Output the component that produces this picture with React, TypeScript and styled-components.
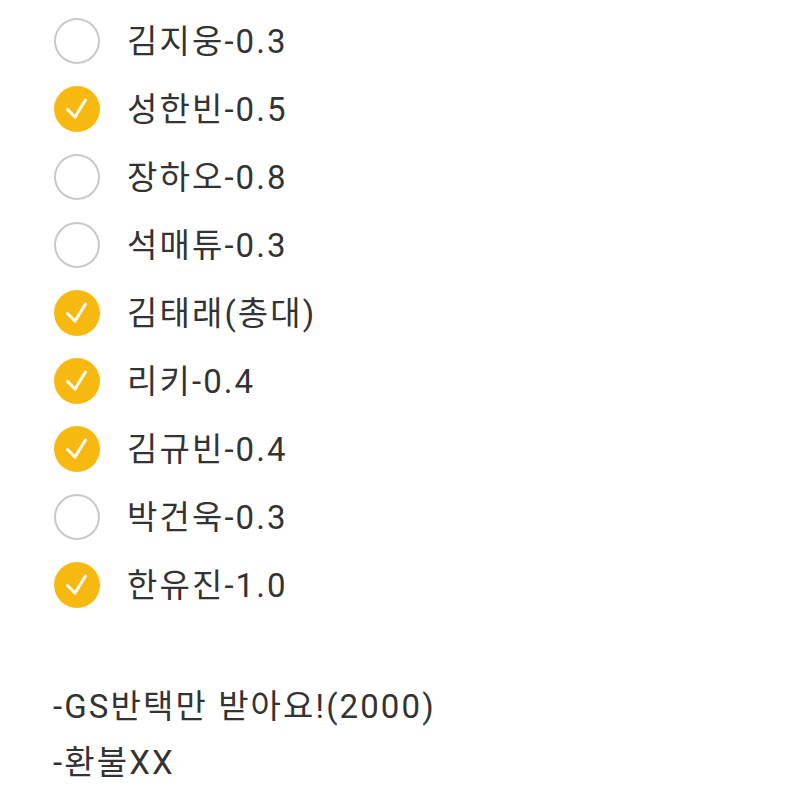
import React from 'react';
import styled, { createGlobalStyle } from 'styled-components';

const GlobalStyle = createGlobalStyle`
  html, body {
    margin: 0;
    padding: 0;
    background: #fff;
    overflow: hidden;
  }
  body {
    font-family: Roboto, 'Noto Sans CJK KR', sans-serif;
    color: #333;
  }
`;

const Page = styled.div`
  padding: 7px 0 0 54px;
`;

const List = styled.ul`
  list-style: none;
  margin: 0;
  padding: 0;
`;

const Row = styled.li`
  display: flex;
  align-items: center;
  gap: 27px;
  height: 68px;
`;

const Circle = styled.span<{ $checked: boolean }>`
  box-sizing: border-box;
  width: 46px;
  height: 46px;
  flex: none;
  border-radius: 50%;
  display: flex;
  align-items: center;
  justify-content: center;
  background: ${(p) => (p.$checked ? '#f7b90f' : '#fff')};
  border: ${(p) => (p.$checked ? 'none' : '2px solid #c9c9c9')};
  svg {
    display: block;
  }
`;

const Label = styled.span`
  font-size: 33px;
  line-height: 1;
  color: #333;
  letter-spacing: 2.1px;
`;

const Notes = styled.div`
  margin-top: 60px;
  margin-left: -1px;
`;

const Note = styled.p`
  margin: 0;
  font-size: 33px;
  line-height: 56px;
  color: #333;
  letter-spacing: 2.1px;
`;

const items = [
  { name: '김지웅-0.3', checked: false },
  { name: '성한빈-0.5', checked: true },
  { name: '장하오-0.8', checked: false },
  { name: '석매튜-0.3', checked: false },
  { name: '김태래(총대)', checked: true },
  { name: '리키-0.4', checked: true },
  { name: '김규빈-0.4', checked: true },
  { name: '박건욱-0.3', checked: false },
  { name: '한유진-1.0', checked: true },
];

function Check() {
  return (
    <svg width="26" height="26" viewBox="0 0 26 26">
      <path
        d="M3.5 13.5 L11 21 L21.5 4"
        fill="none"
        stroke="#fff"
        strokeWidth="3"
        strokeLinecap="round"
        strokeLinejoin="round"
      />
    </svg>
  );
}

function App() {
  return (
    <Page>
      <GlobalStyle />
      <List>
        {items.map((item) => (
          <Row key={item.name}>
            <Circle $checked={item.checked}>{item.checked && <Check />}</Circle>
            <Label>{item.name}</Label>
          </Row>
        ))}
      </List>
      <Notes>
        <Note>-GS반택만 받아요!(2000)</Note>
        <Note>-환불XX</Note>
      </Notes>
    </Page>
  );
}

export default App;
